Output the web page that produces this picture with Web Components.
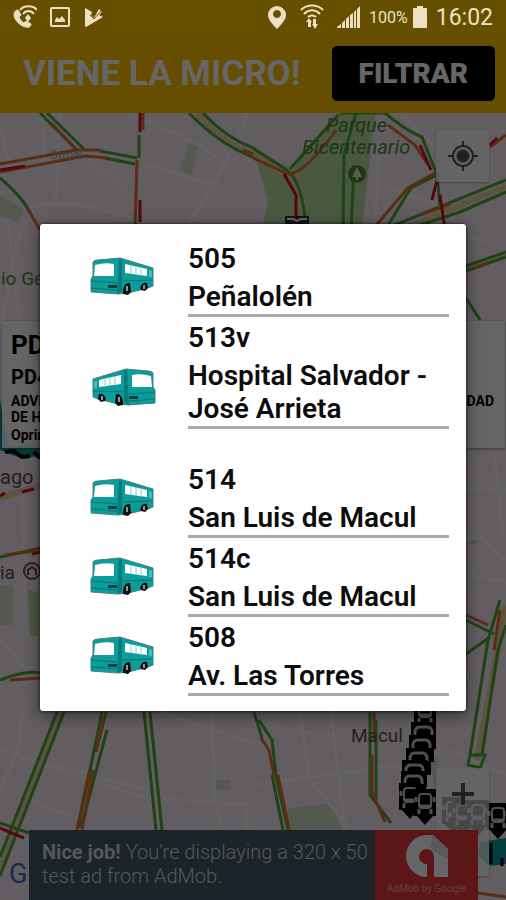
<!DOCTYPE html>
<html lang="es">
<head>
<meta charset="utf-8">
<meta name="viewport" content="width=device-width, initial-scale=1">
<title>Viene la micro!</title>
<style>
  body {
    margin: 0;
    font-family: Roboto, "Liberation Sans", sans-serif;
  }
</style>
</head>
<body>
<micro-app>
  <status-bar slot="status" time="16:02" battery="100%"></status-bar>
  <app-header slot="header" heading="VIENE LA MICRO!">FILTRAR</app-header>
  <traffic-map slot="map">
    <stop-card slot="card">
      <span slot="code">PD</span>
      <span slot="name">PD4</span>
      <span slot="notice">ADVE</span>
      <span slot="notice-end">DAD</span>
      <span slot="detail">DE H</span>
      <span slot="hint">Oprim</span>
    </stop-card>
    <ad-banner slot="banner"><b>Nice job!</b> <span>You're displaying a 320 x 50</span> <span>test ad from AdMob.</span></ad-banner>
  </traffic-map>
  <route-dialog slot="dialog">
    <route-item code="505">Peñalolén</route-item>
    <route-item code="513v" returning>Hospital Salvador - José Arrieta</route-item>
    <route-item code="514">San Luis de Macul</route-item>
    <route-item code="514c">San Luis de Macul</route-item>
    <route-item code="508">Av. Las Torres</route-item>
  </route-dialog>
</micro-app>

<script>
/**
 * Creates a template element from a string.
 *
 * @param {string} html - The markup.
 * @returns {HTMLTemplateElement} The template.
 */
function createTemplate (html) {
  const template = document.createElement('template')
  template.innerHTML = html
  return template
}

/**
 * Base class that attaches a shadow root with a cloned template.
 */
class BaseElement extends HTMLElement {
  /**
   * Creates an instance of the current type.
   */
  constructor () {
    super()
    this.attachShadow({ mode: 'open' })
      .appendChild(this.constructor.template.content.cloneNode(true))
  }

  /**
   * Copies the value of an attribute into an element of the shadow root.
   *
   * @param {string} name - The attribute, also the id of the element.
   */
  fill (name) {
    this.shadowRoot.querySelector('#' + name).textContent = this.getAttribute(name)
  }
}

/* The screen: header above the map, with the dialog over both */
customElements.define('micro-app', class extends BaseElement {
  static template = createTemplate(`
    <style>
      :host {
        display: flex;
        flex-direction: column;
        position: relative;
        min-height: 100vh;
        background: #f2e9f2;
      }
      .map {
        flex: 1;
        display: flex;
      }
      .scrim {
        position: absolute;
        inset: 0;
        display: flex;
        flex-direction: column;
        background: rgba(0, 0, 0, 0.6);
      }
      .center {
        flex: 1;
        display: flex;
        align-items: center;
        padding: 0 40px;
      }
      ::slotted(route-dialog) { flex: 1; }
      ::slotted(traffic-map) { flex: 1; }
    </style>
    <slot name="header"></slot>
    <div class="map"><slot name="map"></slot></div>
    <div class="scrim">
      <slot name="status"></slot>
      <div class="center"><slot name="dialog"></slot></div>
    </div>
  `)
})

/* Status bar */
customElements.define('status-bar', class extends BaseElement {
  static template = createTemplate(`
    <style>
      :host {
        display: flex;
        align-items: center;
        justify-content: space-between;
        height: 34px;
        padding: 0 13px;
        background: #665000;
        color: #ece0c2;
      }
      .group {
        display: flex;
        align-items: center;
        gap: 12px;
      }
      .right { gap: 8px; }
      svg { display: block; fill: currentColor; }
      #battery { font-size: 16px; margin-right: -4px; }
      #time { font-size: 23px; }
    </style>
    <div class="group">
      <svg width="24" height="24" viewBox="0 0 24 24">
        <path d="M1 9 C1 7 3 5 5 5 L8 10 L6 12 C7 15 9 17 11 18 L13 16 L18 19 C18 22 15 23 13 22 C7 21 1 15 1 9Z" stroke="currentColor"/>
        <g fill="none" stroke="currentColor" stroke-width="2">
          <path d="M7 5 C11 0 20 0 24 5M10 9 C13 5 18 5 21 9"/>
        </g>
        <path d="M15 9 l3 4 -3 4 -3 -4z"/>
      </svg>
      <svg width="22" height="22" viewBox="0 0 22 22">
        <rect x="2" y="2" width="18" height="18" rx="1" fill="none" stroke="currentColor" stroke-width="2"/>
        <path d="M6 16 V14 L8 11 L10 13 L13 10 L16 14 V16Z"/>
      </svg>
      <svg width="22" height="22" viewBox="0 0 22 22">
        <path d="M2 2 L9 6 L8 9 L11 12 L16 3 L19 6 L16 9 L20 11 L3 21 Q2 21 2 19Z"/>
        <path d="M7 9 L11 13 L18 5" fill="none" stroke="#665000" stroke-width="1"/>
      </svg>
    </div>
    <div class="group right">
      <svg width="20" height="25" viewBox="0 0 20 25">
        <path fill-rule="evenodd" d="M10 1 A9 9 0 0 1 19 10 C19 15 13 21 10 24 C7 21 1 15 1 10 A9 9 0 0 1 10 1Z M10 5 a4 4 0 1 0 0.010 0Z"/>
      </svg>
      <svg width="34" height="26" viewBox="-5 0 34 26">
        <path d="M1 6 C7 0 17 0 23 6M4 10 C9 5 15 5 20 10M8 13 C10 11 14 11 16 13" fill="none" stroke="currentColor" stroke-width="2"/>
        <path d="M6 18 L9 14 L12 18 H11 V23 H8 V18Z M12 20 H13 V15 H16 V20 H18 L15 25Z"/>
      </svg>
      <svg width="24" height="24" viewBox="0 0 24 24">
        <path d="M0 22 L4 19 V23 H0Z M5 18 L8 15 V23 H5Z M9 14 L12 11 V23 H9Z M13 10 L16 8 V23 H13Z M17 7 L19 5 V23 H17Z M20 4 L23 1 V23 H20Z"/>
      </svg>
      <span id="battery"></span>
      <svg width="16" height="24" viewBox="0 0 16 24">
        <path d="M5 1 H11 V3 H14 Q15 3 15 4 V22 Q15 23 14 23 H2 Q1 23 1 22 V4 Q1 3 2 3 H5Z"/>
      </svg>
      <span id="time"></span>
    </div>
  `)

  /**
   * Called after the element is inserted into the DOM.
   */
  connectedCallback () {
    this.fill('battery')
    this.fill('time')
  }
})

/* Header with the filter button */
customElements.define('app-header', class extends BaseElement {
  static template = createTemplate(`
    <style>
      :host {
        display: flex;
        align-items: center;
        justify-content: space-between;
        padding: 46px 11px 12px 23px;
        background: #ffc000;
      }
      h1 {
        margin: 0;
        color: #ffffff;
        font-size: 35px;
        line-height: 40px;
        font-weight: 700;
        white-space: nowrap;
      }
      button {
        height: 55px;
        padding: 0 27px;
        border: 0;
        border-radius: 5px;
        background: #000000;
        color: #ffffff;
        font: 900 28px/33px Roboto, "Liberation Sans", sans-serif;
      }
    </style>
    <h1 id="heading"></h1>
    <button type="button"><slot></slot></button>
  `)

  /**
   * Called after the element is inserted into the DOM.
   */
  connectedCallback () {
    this.fill('heading')
  }
})

/* Map with traffic lines, bus markers and controls */
customElements.define('traffic-map', class extends BaseElement {
  static template = createTemplate(`
    <style>
      :host {
        display: flex;
        flex-direction: column;
        position: relative;
        overflow: hidden;
      }
      .canvas {
        position: absolute;
        width: 100%;
        height: 100%;
      }
      .street { fill: none; stroke: #fbf7fb; stroke-width: 3; }
      .park { fill: #bcdca0; }
      .garden { fill: #d3dfc6; }
      .green, .orange, .red, .yellow { fill: none; stroke-width: 3; }
      .green { stroke: #4fa834; }
      .orange { stroke: #e0702e; }
      .red { stroke: #d01228; }
      .yellow { stroke: #e6d3a4; stroke-width: 6; }
      .poi { fill: #4f8a35; }
      .place { fill: #555055; }
      text { font-family: Roboto, "Liberation Sans", sans-serif; }
      .controls {
        position: absolute;
        inset: 17px 17px 24px auto;
        display: flex;
        flex-direction: column;
        justify-content: space-between;
      }
      button {
        display: flex;
        justify-content: center;
        width: 53px;
        padding: 10px 0;
        border: 0;
        background: rgba(255, 255, 255, 0.7);
        box-shadow: 0 1px 2px rgba(0, 0, 0, 0.3);
      }
      button.zoom { padding: 10px 0 66px; }
      button svg { fill: none; stroke: #555055; stroke-width: 3; }
      .overlay {
        flex: 1;
        position: relative;
        display: flex;
        flex-direction: column;
        justify-content: space-between;
        padding: 208px 0 0;
        pointer-events: none;
      }
      ::slotted(ad-banner) { margin: 0 28px 0 29px; }
      ::slotted(stop-card) { margin: 0 1px 0 2px; }
    </style>
    <svg class="canvas" viewBox="0 113 506 787" preserveAspectRatio="xMidYMid slice" aria-hidden="true">
      <defs>
        <g id="pin">
          <path d="M0 0 H22 V27 H19 L11 36 L3 27 H0Z" fill="#000000"/>
          <rect x="5" y="5" width="12" height="14" rx="3" fill="none" stroke="#c8c4c8" stroke-width="2"/>
          <path d="M2 8 V13 M20 8 V13 M5 20 V25 M17 20 V25 M5 17 H17" stroke="#c8c4c8" stroke-width="3"/>
        </g>
        <g id="tail">
          <path d="M0 0 H25 V27 H0Z" fill="#000000"/>
          <path d="M4 13 V9 Q5 5 9 5 H16 Q20 5 21 9 V13" fill="none" stroke="#c8c4c8" stroke-width="3"/>
        </g>
      </defs>
      <g class="park">
        <path d="M253 150 L290 168 L338 113 H375 L362 230 H262 L268 200Z"/>
        <path d="M28 590 L38 592 V636 L30 636Z"/>
      </g>
      <g class="garden">
        <path d="M188 143 L198 145 L192 175 L180 172Z"/>
        <path d="M0 195 L24 210 L18 222 L0 216Z M0 585 H13 V625 H0Z"/>
        <path d="M288 808 L332 803 L342 830 H285Z M215 780 H230 V790 H215Z M430 768 L437 755 V790Z"/>
        <circle cx="473" cy="541" r="4"/>
      </g>
      <g class="street">
        <path d="M0 125 L8 160M42 113 L44 160M60 113 L56 200M85 155 L135 200M30 207 Q70 195 134 220M130 115 Q200 140 225 165"/>
        <path d="M140 163 L210 183 M248 113 L225 165 L188 225M20 230 L0 330M375 185 L440 205M380 140 L375 225M400 115 L440 150"/>
        <path d="M8 220 L20 330 M22 460 L25 620M0 640 L25 668 H41M22 712 L20 745 L0 790M0 750 L140 797 L253 805M160 712 L253 743"/>
        <path d="M212 712 L215 800 L222 830M245 808 L248 830M30 800 L80 820 M50 765 L150 790M300 712 L310 780 L350 830"/>
        <path d="M253 785 L400 765 M330 705 L345 830 M253 725 L330 735M450 490 H506 M495 455 L503 540M466 540 L480 537 L506 560M466 575 L506 582"/>
        <path d="M450 750 L506 775 M466 670 L480 720 M466 235 L490 245"/>
      </g>
      <g class="yellow">
        <path d="M197 113 Q225 145 253 154 L288 175 Q300 190 300 230M0 498 L41 485 M466 268 L506 254M506 605 L477 760M60 712 L0 870"/>
        <path d="M400 230 L506 186"/>
      </g>
      <g class="green">
        <path d="M40 113 L76 149M47 113 L84 149 M100 151 L137 158M105 158 L135 164M0 178 Q20 195 28 209M139 135 V158"/>
        <path d="M189 113 Q220 145 253 157M203 113 Q225 137 253 148 L285 169 Q303 180 306 230M290 169 L338 115"/>
        <path d="M343 230 L344 155 L356 113M351 230 L354 165 M340 113 H385 Q405 130 422 137 L437 175 L440 205 M385 230 L411 188 L437 175 M395 225 L506 180M405 230 L460 212 L506 192"/>
        <path d="M466 266 L506 252M466 271 L506 257 M466 298 L480 320M0 557 L41 548M0 680 Q25 670 41 673M466 620 L494 634M466 654 L490 637"/>
        <path d="M500 600 L488 640 L470 755 M506 625 L498 650 L482 755M470 755 L468 765 L480 768 L485 755Z"/>
        <path d="M57 712 L0 857 M64 712 L0 876M102 712 L78 828M107 730 L81 828M144 712 L156 830M150 712 L162 830M0 823 L29 833"/>
        <path d="M254 712 L262 738 M259 720 L272 740 L276 775 M275 772 L288 830M370 712 V795 L391 823 M376 720 V800M272 775 L283 830"/>
      </g>
      <g class="orange">
        <path d="M0 164 L76 150 H100M0 172 L85 156 L107 158M52 124 L74 147M137 160 L135 230M28 209 L40 230M143 113 V130"/>
        <path d="M243 150 L253 154M253 158 L288 174 Q305 174 336 130M372 230 L408 188 L435 173M388 125 L415 145 L428 165M490 147 L506 135M420 215 L450 204"/>
        <path d="M5 555 L41 550 M472 269 L488 263M10 680 L41 678M500 610 L494 650M466 615 L488 625"/>
        <path d="M106 712 L96 752M89 772 L77 830M93 770 L82 830M261 738 L269 750 L274 775M278 775 L289 830M372 755 V792 L385 822M374 712 V740M478 893 L506 897"/>
      </g>
      <g class="red">
        <path d="M0 170 L25 166M140 113 V132M140 200 V222M284 174 L296 195 V218M420 145 L431 170M440 195 L445 230M437 180 L432 200M490 145 L497 138M0 496 L5 493M22 492 L34 489M32 554 L41 552M0 828 L24 838"/>
      </g>
      <path d="M285 216 H309 V230 H285Z" fill="#333333"/>
      <path d="M287 219 H293 L297 221 L301 219 H307" stroke="#ffffff" stroke-width="2" fill="none"/>
      <circle cx="357" cy="174" r="9" fill="#4f8a35"/>
      <path d="M357 167 L362 177 H358 V180 H356 V177 H352Z" fill="#dceccf"/>
      <g class="poi" font-size="20" font-style="italic">
        <text x="326" y="132">Parque</text>
        <text x="302" y="154">Bicentenario</text>
      </g>
      <text class="poi" x="1" y="285" font-size="19">io Ge</text>
      <g class="place" font-size="20">
        <text x="0" y="484">ago</text>
        <text x="0" y="579" font-size="19">ia</text>
        <text x="351" y="742" font-size="19">Macul</text>
      </g>
      <text x="50" y="159" font-size="12" fill="#a8a0a0">Otroal</text>
      <circle cx="32" cy="571" r="8" fill="none" stroke="#6d4c41" stroke-width="2"/>
      <path d="M28 575 V570 L32 567 L36 570 V575" fill="none" stroke="#6d4c41" stroke-width="2"/>
      <path d="M0 400 V450 L20 458 L41 456 V440 L8 448Z" fill="#0a9a9a"/>
      <path d="M5 452 L14 451 L22 457 L30 456 M34 452 L40 458" stroke="#000000" stroke-width="4" fill="none"/>
      <text x="9" y="883" font-size="27" fill="#2f6fd0">G</text>
      <use href="#pin" x="414" y="698"/>
      <use href="#tail" x="411" y="722"/>
      <use href="#tail" x="409" y="735"/>
      <use href="#tail" x="406" y="748"/>
      <use href="#tail" x="402" y="760"/>
      <use href="#tail" x="401" y="771"/>
      <use href="#pin" x="399" y="783"/>
      <use href="#pin" x="414" y="789"/>
      <use href="#pin" x="442" y="797"/>
      <use href="#pin" x="452" y="800"/>
      <use href="#pin" x="467" y="800"/>
      <path d="M480 842 L506 838 V864 L490 866 L478 856Z" fill="#0a9a9a"/>
      <path d="M491 843 V864 M502 858 V866" stroke="#000000" stroke-width="3"/>
      <use href="#pin" x="487" y="803"/>
    </svg>
    <div class="controls">
      <button type="button" aria-label="Mi ubicación">
        <svg width="32" height="32" viewBox="0 0 32 32">
          <circle cx="16" cy="16" r="10" stroke-width="2"/>
          <circle cx="16" cy="16" r="5" fill="#555055"/>
          <path d="M16 1 V6 M16 26 V31 M1 16 H6 M26 16 H31" stroke-width="2"/>
        </svg>
      </button>
      <button type="button" class="zoom" aria-label="Acercar">
        <svg width="32" height="32" viewBox="0 0 32 32">
          <path d="M16 5 V27 M5 16 H27" stroke-width="4"/>
        </svg>
      </button>
    </div>
    <div class="overlay">
      <slot name="card"></slot>
      <slot name="banner"></slot>
    </div>
  `)
})

/* Card with the selected bus stop */
customElements.define('stop-card', class extends BaseElement {
  static template = createTemplate(`
    <style>
      :host {
        display: flex;
        flex-direction: column;
        padding: 8px 11px 3px 9px;
        background: rgba(255, 255, 255, 0.85);
        box-shadow: 0 1px 3px rgba(0, 0, 0, 0.4);
        color: #000000;
        font-weight: 700;
      }
      .code { font-size: 26px; line-height: 32px; }
      .name { font-size: 20px; line-height: 32px; }
      .notice {
        display: flex;
        justify-content: space-between;
        font-size: 14px;
        line-height: 16px;
      }
      .hint { font-size: 14px; line-height: 20px; }
    </style>
    <div class="code"><slot name="code"></slot></div>
    <div class="name"><slot name="name"></slot></div>
    <div class="notice"><slot name="notice"></slot><slot name="notice-end"></slot></div>
    <div class="notice"><slot name="detail"></slot></div>
    <div class="hint"><slot name="hint"></slot></div>
  `)
})

/* Ad banner at the bottom of the map */
customElements.define('ad-banner', class extends BaseElement {
  static template = createTemplate(`
    <style>
      :host {
        display: flex;
        min-height: 70px;
        background: #455a64;
        color: #d5d8da;
      }
      p {
        flex: 1;
        margin: 0;
        padding: 10px 0 0 13px;
        font-size: 20px;
        line-height: 24px;
        font-weight: 300;
      }
      ::slotted(b) { font-weight: 700; }
      .brand {
        display: flex;
        flex-direction: column;
        align-items: center;
        width: 103px;
        padding-top: 5px;
        background: #e8383b;
        font-size: 10px;
        line-height: 20px;
        white-space: nowrap;
      }
      .brand span { color: #efa0a0; }
    </style>
    <p><slot></slot></p>
    <div class="brand">
      <svg width="44" height="44" viewBox="0 0 44 44" aria-hidden="true">
        <path d="M22 0 H28 L43 14 V42 H29 V22 A7.500 7.500 0 1 0 22 29 V42 A21 21 0 0 1 22 0Z" fill="#ffffff"/>
        <path d="M28 0 L43 14 V24 L25 14Z" fill="#dedede"/>
      </svg>
      <span>AdMob by Google</span>
    </div>
  `)
})

/* Dialog with the list of routes */
customElements.define('route-dialog', class extends BaseElement {
  static template = createTemplate(`
    <style>
      :host {
        display: block;
        padding: 14px 17px 15px 18px;
        border-radius: 3px;
        background: #ffffff;
        box-shadow: 0 4px 16px rgba(0, 0, 0, 0.5), 0 0 3px rgba(0, 0, 0, 0.8);
      }
    </style>
    <div role="list"><slot></slot></div>
  `)

  /**
   * Called after the element is inserted into the DOM.
   */
  connectedCallback () {
    this.setAttribute('role', 'dialog')
  }
})

/* One route, with the bus turned around on the way back */
customElements.define('route-item', class extends BaseElement {
  static template = createTemplate(`
    <style>
      :host {
        display: flex;
        align-items: center;
        gap: 32px;
        color: #0c0c0c;
      }
      :host([returning]) .text { padding-bottom: 30px; }
      :host([returning]) svg { transform: scaleX(-1); }
      svg {
        flex: none;
        margin-left: 32px;
      }
      .text { flex: 1; }
      .code, .name {
        font-size: 28px;
        line-height: 33px;
        font-weight: 600;
      }
      .code { padding: 4px 0 5px; }
      .name {
        padding-bottom: 1px;
        border-bottom: 3px solid #aaaaaa;
      }
    </style>
    <svg width="66" height="40" viewBox="0 0 66 40" aria-hidden="true">
      <path d="M3 5 Q4 3 8 3 L30 1 L63 11 V29 L58 31 L38 36 L28 37 L1 35 V22 L3 19Z" fill="#0b9c9c" stroke="#4a7c7e" stroke-width="1"/>
      <path d="M29 2 L32 3 V35 L27 37Z" fill="#087a7c"/>
      <path d="M5 8 Q15 5 24 7 V19 H4Z" fill="#ffffff"/>
      <path d="M35 7 L57 12 V19 L35 16Z" fill="#ffffff"/>
      <path d="M41 8 V17 M46 9 V18 M51 10 V19" stroke="#7fd0d0" stroke-width="1"/>
      <path d="M59 13 L62 14 V20 L59 20Z" fill="#4dbcbc"/>
      <path d="M1 24 L27 26 M1 31 L27 33 M33 24 L63 23" stroke="#087071" stroke-width="1" fill="none"/>
      <path d="M18 28 L27 28 V31 L18 31Z" fill="#163c3c"/>
      <path d="M33 34 Q34 25 40 26 L41 35 L38 38 L33 37Z M50 31 Q52 25 57 26 L58 31 L55 34 L51 33Z" fill="#111111"/>
      <path d="M37 29 V34 M54 28 V32" stroke="#8a9a9a" stroke-width="2"/>
    </svg>
    <div class="text">
      <div class="code" id="code"></div>
      <div class="name"><slot></slot></div>
    </div>
  `)

  /**
   * Called after the element is inserted into the DOM.
   */
  connectedCallback () {
    this.setAttribute('role', 'listitem')
    this.fill('code')
  }
})
</script>
</body>
</html>
